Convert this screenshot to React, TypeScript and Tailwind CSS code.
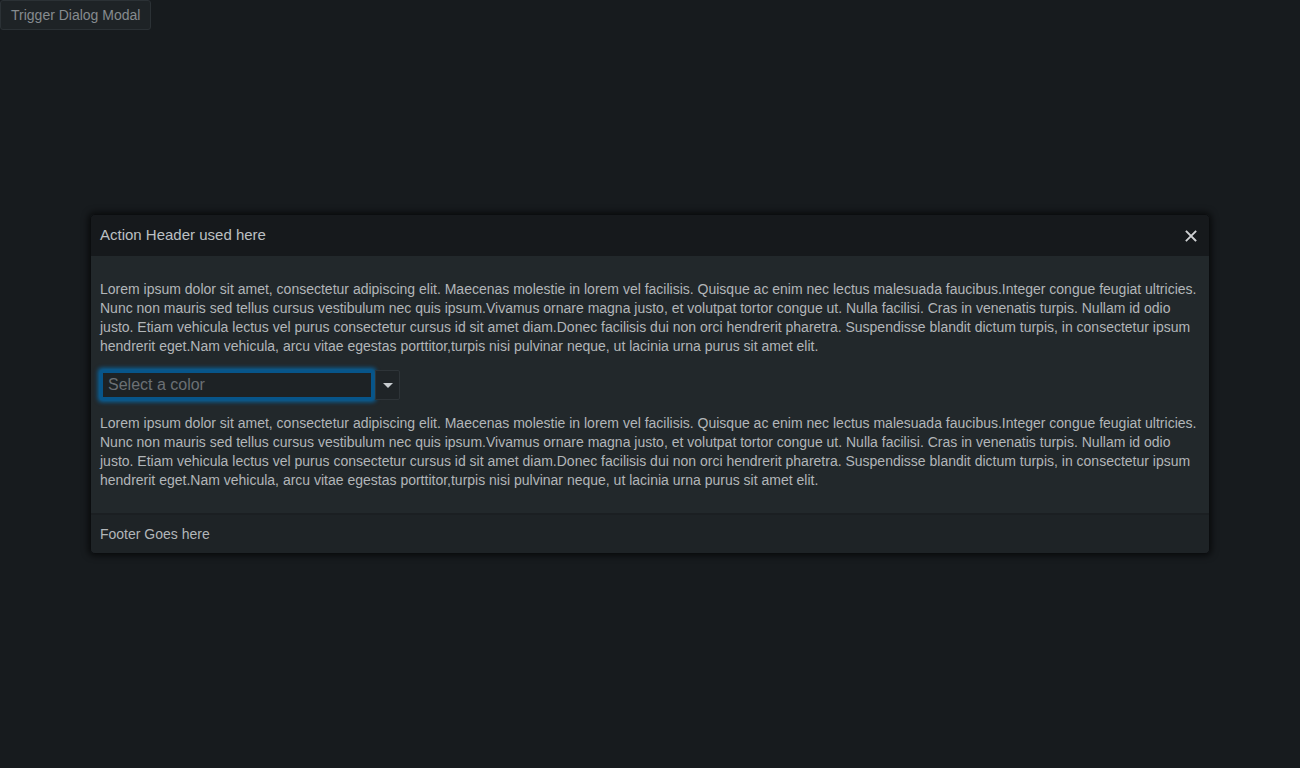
import { useState } from 'react';

const LOREM =
    'Lorem ipsum dolor sit amet, consectetur adipiscing elit. Maecenas molestie in lorem vel facilisis. Quisque ac enim nec lectus malesuada faucibus.Integer congue feugiat ultricies. Nunc non mauris sed tellus cursus vestibulum nec quis ipsum.Vivamus ornare magna justo, et volutpat tortor congue ut. Nulla facilisi. Cras in venenatis turpis. Nullam id odio justo. Etiam vehicula lectus vel purus consectetur cursus id sit amet diam.Donec facilisis dui non orci hendrerit pharetra. Suspendisse blandit dictum turpis, in consectetur ipsum hendrerit eget.Nam vehicula, arcu vitae egestas porttitor,turpis nisi pulvinar neque, ut lacinia urna purus sit amet elit.';

export default function App() {
    const [open, setOpen] = useState(true);
    const [color, setColor] = useState('');

    return (
        <div className="min-h-screen w-full bg-[#171b1e] font-['Liberation_Sans',Arial,sans-serif] relative">
            <button
                onClick={() => setOpen(true)}
                className="h-[30px] px-[10px] text-[14px] text-[#868b8f] bg-[#1e2326] border border-[#2b3135] rounded-[3px]"
            >
                Trigger Dialog Modal
            </button>

            {open && (
                <div className="absolute left-[90px] top-[214px] w-[1120px] rounded-[5px] overflow-hidden shadow-[0_0_6px_2px_rgba(0,0,0,0.6)] border border-[#0b0d0f]">
                    {/* header */}
                    <div className="h-[41px] bg-[#16191c] flex items-center justify-between pl-[9px] pr-[12px]">
                        <span className="text-[15px] text-[#bcc0c3]">Action Header used here</span>
                        <button onClick={() => setOpen(false)} className="text-[#cfd1d3]">
                            <svg width="12" height="12" viewBox="0 0 12 12" stroke="currentColor" strokeWidth="1.8" strokeLinecap="square">
                                <path d="M1.5 1.5l9 9M10.5 1.5l-9 9" />
                            </svg>
                        </button>
                    </div>

                    {/* body */}
                    <div className="bg-[#22282b] pl-[9px] pr-[10px] pt-[24px] pb-[23px] text-[14px] leading-[19px] text-[#b2b6b9]">
                        <p>{LOREM}</p>
                        <div className="flex items-stretch mt-[14px] mb-[14px] h-[30px]">
                            <input
                                value={color}
                                onChange={(e) => setColor(e.target.value)}
                                placeholder="Select a color"
                                className="w-[274px] h-[30px] px-[5px] text-[16px] bg-[#1d2225] text-[#c4c8cc] placeholder:text-[#6b7074] border-[3px] border-[#07558a] rounded-[2px] outline-none shadow-[0_0_4px_2px_rgba(0,115,190,0.8)]"
                            />
                            <button className="w-[25px] ml-[1px] h-[30px] flex items-center justify-center bg-[#1f2427] border border-[#2e3438] rounded-r-[2px]">
                                <svg width="10" height="5" viewBox="0 0 10 5" fill="#c8ccd0">
                                    <path d="M0 0h10L5 5z" />
                                </svg>
                            </button>
                        </div>
                        <p>{LOREM}</p>
                    </div>

                    {/* footer */}
                    <div className="h-[40px] bg-[#1e2326] border-t-2 border-[#1b1f22] flex items-center pl-[9px] text-[14px] text-[#b2b6b9]">
                        Footer Goes here
                    </div>
                </div>
            )}
        </div>
    );
}
